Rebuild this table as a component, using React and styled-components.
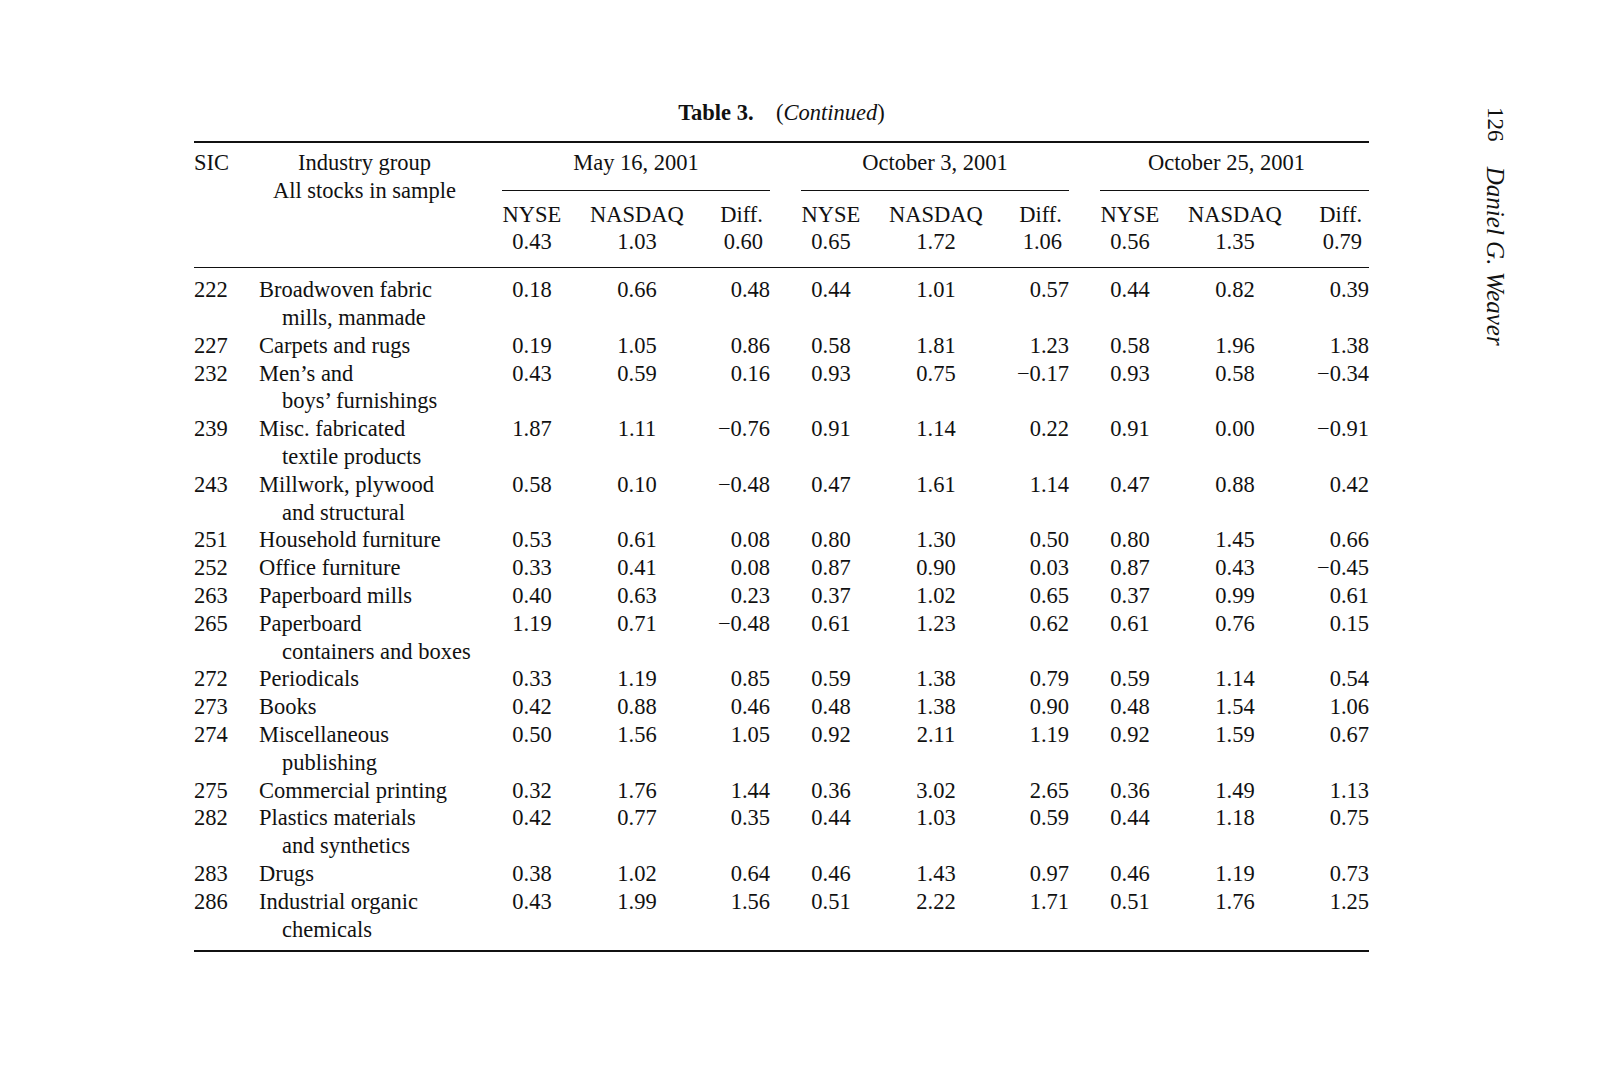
import React from "react";
import styled, { createGlobalStyle } from "styled-components";

const Global = createGlobalStyle`
  html, body { margin: 0; padding: 0; background: #fff; }
  body {
    font-family: "Liberation Serif", "Times New Roman", serif;
    color: #111;
  }
`;

const Page = styled.div`
  width: 1600px;
  min-height: 1069px;
  box-sizing: border-box;
  padding: 99px 0 0 194px;
  display: flex;
  align-items: flex-start;
  font-size: 22.5px;
  line-height: 27.8px;
`;

const Figure = styled.div`
  width: 1175px;
  display: flex;
  flex-direction: column;
`;

const Caption = styled.div`
  text-align: center;
  margin-bottom: 14px;
`;

const CaptionLabel = styled.span`
  font-weight: bold;
`;

const CaptionNote = styled.span`
  margin-left: 1em;
  em { font-style: italic; }
`;

const Frame = styled.div`
  border-top: 2px solid #111;
  border-bottom: 2px solid #111;
`;

const Table = styled.table`
  width: 1175px;
  table-layout: fixed;
  border-collapse: separate;
  border-spacing: 0;
  font-size: 22.5px;
  line-height: 27.8px;
`;

const HeadCell = styled.th`
  font-weight: normal;
  padding: ${(p) => p.$pad || "0"};
  text-align: ${(p) => p.$align || "left"};
  vertical-align: top;
  white-space: nowrap;
  border-bottom: ${(p) => (p.$rule ? "1px solid #111" : "none")};
`;

const GroupHead = styled.th`
  font-weight: normal;
  text-align: center;
  padding: 6px ${(p) => p.$shift || 0}px 13px 0;
  border-bottom: 1px solid #111;
  white-space: nowrap;
`;

const Spacer = styled.th`
  padding: 0;
  border-bottom: ${(p) => (p.$rule ? "1px solid #111" : "none")};
`;

const Row = styled.tr`
  &:first-child td { padding-top: 8px; }
  &:last-child td { padding-bottom: 7px; }
`;

const Cell = styled.td`
  padding: 0;
  vertical-align: top;
  white-space: nowrap;
  text-align: ${(p) => p.$align || "left"};
`;

const Name = styled.div`
  padding-left: 23px;
  text-indent: -23px;
`;

const RunningHead = styled.div`
  writing-mode: vertical-rl;
  margin-left: 112px;
  margin-top: 8px;
  font-size: 23px;
  line-height: 28px;
  white-space: nowrap;
`;

const Folio = styled.span`
  margin-bottom: 1.1em;
  display: inline-block;
`;

const Author = styled.span`
  font-style: italic;
  font-size: 25px;
`;

const rows = [
  ["222", ["Broadwoven fabric", "mills, manmade"], ["0.18", "0.66", "0.48"], ["0.44", "1.01", "0.57"], ["0.44", "0.82", "0.39"]],
  ["227", ["Carpets and rugs"], ["0.19", "1.05", "0.86"], ["0.58", "1.81", "1.23"], ["0.58", "1.96", "1.38"]],
  ["232", ["Men’s and", "boys’ furnishings"], ["0.43", "0.59", "0.16"], ["0.93", "0.75", "−0.17"], ["0.93", "0.58", "−0.34"]],
  ["239", ["Misc. fabricated", "textile products"], ["1.87", "1.11", "−0.76"], ["0.91", "1.14", "0.22"], ["0.91", "0.00", "−0.91"]],
  ["243", ["Millwork, plywood", "and structural"], ["0.58", "0.10", "−0.48"], ["0.47", "1.61", "1.14"], ["0.47", "0.88", "0.42"]],
  ["251", ["Household furniture"], ["0.53", "0.61", "0.08"], ["0.80", "1.30", "0.50"], ["0.80", "1.45", "0.66"]],
  ["252", ["Office furniture"], ["0.33", "0.41", "0.08"], ["0.87", "0.90", "0.03"], ["0.87", "0.43", "−0.45"]],
  ["263", ["Paperboard mills"], ["0.40", "0.63", "0.23"], ["0.37", "1.02", "0.65"], ["0.37", "0.99", "0.61"]],
  ["265", ["Paperboard", "containers and boxes"], ["1.19", "0.71", "−0.48"], ["0.61", "1.23", "0.62"], ["0.61", "0.76", "0.15"]],
  ["272", ["Periodicals"], ["0.33", "1.19", "0.85"], ["0.59", "1.38", "0.79"], ["0.59", "1.14", "0.54"]],
  ["273", ["Books"], ["0.42", "0.88", "0.46"], ["0.48", "1.38", "0.90"], ["0.48", "1.54", "1.06"]],
  ["274", ["Miscellaneous", "publishing"], ["0.50", "1.56", "1.05"], ["0.92", "2.11", "1.19"], ["0.92", "1.59", "0.67"]],
  ["275", ["Commercial printing"], ["0.32", "1.76", "1.44"], ["0.36", "3.02", "2.65"], ["0.36", "1.49", "1.13"]],
  ["282", ["Plastics materials", "and synthetics"], ["0.42", "0.77", "0.35"], ["0.44", "1.03", "0.59"], ["0.44", "1.18", "0.75"]],
  ["283", ["Drugs"], ["0.38", "1.02", "0.64"], ["0.46", "1.43", "0.97"], ["0.46", "1.19", "0.73"]],
  ["286", ["Industrial organic", "chemicals"], ["0.43", "1.99", "1.56"], ["0.51", "2.22", "1.71"], ["0.51", "1.76", "1.25"]],
];

const groups = [
  { date: "May 16, 2001", all: ["0.43", "1.03", "0.60"], shift: 0 },
  { date: "October 3, 2001", all: ["0.65", "1.72", "1.06"], shift: 0 },
  { date: "October 25, 2001", all: ["0.56", "1.35", "0.79"], shift: 16 },
];

const groupCols = (last) => [
  <col key="a" style={{ width: 60 }} />,
  <col key="b" style={{ width: 150 }} />,
  <col key="c" style={{ width: last ? 59 : 58 }} />,
];

function Values({ vals }) {
  return (
    <>
      <Cell $align="center">{vals[0]}</Cell>
      <Cell $align="center">{vals[1]}</Cell>
      <Cell $align="right">{vals[2]}</Cell>
    </>
  );
}

export default function App() {
  return (
    <>
      <Global />
      <Page>
        <Figure>
          <Caption>
            <CaptionLabel>Table 3.</CaptionLabel>
            <CaptionNote>
              (<em>Continued</em>)
            </CaptionNote>
          </Caption>
          <Frame>
            <Table>
              <colgroup>
                <col style={{ width: 65 }} />
                <col style={{ width: 243 }} />
                {groupCols(false)}
                <col style={{ width: 31 }} />
                {groupCols(false)}
                <col style={{ width: 31 }} />
                {groupCols(true)}
              </colgroup>
              <thead>
                <tr>
                  <HeadCell rowSpan={2} $pad="6px 0 0" $rule>
                    SIC
                  </HeadCell>
                  <HeadCell rowSpan={2} $pad="6px 32px 0 0" $align="center" $rule>
                    Industry group
                    <br />
                    All stocks in sample
                  </HeadCell>
                  {groups.map((g, i) => (
                    <React.Fragment key={g.date}>
                      {i > 0 && <Spacer />}
                      <GroupHead colSpan={3} $shift={g.shift}>
                        {g.date}
                      </GroupHead>
                    </React.Fragment>
                  ))}
                </tr>
                <tr>
                  {groups.map((g, i) => (
                    <React.Fragment key={g.date}>
                      {i > 0 && <Spacer $rule />}
                      <HeadCell $pad="10px 0 11px" $align="center" $rule>
                        NYSE
                        <br />
                        {g.all[0]}
                      </HeadCell>
                      <HeadCell $pad="10px 0 11px" $align="center" $rule>
                        NASDAQ
                        <br />
                        {g.all[1]}
                      </HeadCell>
                      <HeadCell $pad="10px 7px 11px 0" $align="right" $rule>
                        Diff.
                        <br />
                        {g.all[2]}
                      </HeadCell>
                    </React.Fragment>
                  ))}
                </tr>
              </thead>
              <tbody>
                {rows.map(([sic, name, a, b, c]) => (
                  <Row key={sic}>
                    <Cell>{sic}</Cell>
                    <Cell>
                      <Name>
                        {name[0]}
                        {name[1] && (
                          <>
                            <br />
                            {name[1]}
                          </>
                        )}
                      </Name>
                    </Cell>
                    <Values vals={a} />
                    <Cell />
                    <Values vals={b} />
                    <Cell />
                    <Values vals={c} />
                  </Row>
                ))}
              </tbody>
            </Table>
          </Frame>
        </Figure>
        <RunningHead>
          <Folio>126</Folio>
          <Author>Daniel G. Weaver</Author>
        </RunningHead>
      </Page>
    </>
  );
}
